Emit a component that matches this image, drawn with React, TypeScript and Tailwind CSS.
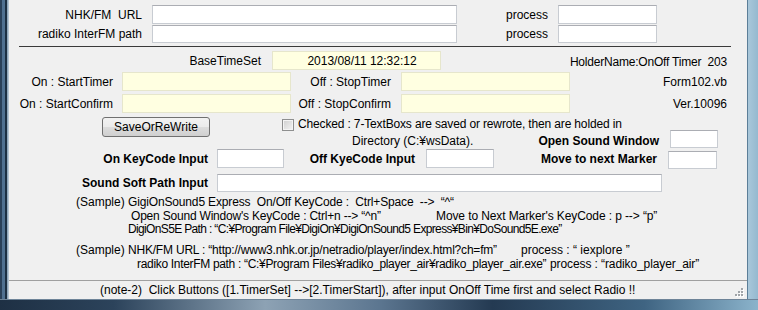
import React from 'react';

const txt = "text-[12px] leading-none text-black whitespace-nowrap";
const boxWhite = "bg-white border border-[#c8ccd2] border-t-[#abadb3]";
const boxYellow = "bg-[#ffffe1] border border-[#e6e6cc]";

const Grip: React.FC = () => (
  <svg width="10" height="10" viewBox="0 0 10 10" className="absolute right-[3px] bottom-[2px]">
    {[
      [7, 1],
      [4, 4], [7, 4],
      [1, 7], [4, 7], [7, 7],
    ].map(([x, y], i) => (
      <g key={i}>
        <rect x={x + 1} y={y + 1} width="2" height="2" fill="#ffffff" />
        <rect x={x} y={y} width="2" height="2" fill="#a0a4a8" />
      </g>
    ))}
  </svg>
);

const App: React.FC = () => {
  return (
    <div
      className="w-[758px] h-[310px] flex flex-col overflow-hidden"
      style={{ fontFamily: '"Liberation Sans", Arial, "Noto Sans CJK JP", sans-serif' }}
    >
      <div className="flex h-[299px]">
        {/* left window frame */}
        <div className="w-[9px] h-full bg-[linear-gradient(to_right,#2a4058_0px,#2a4058_2px,#4f7090_2px,#4f7090_5px,#1c2f42_5px,#1c2f42_7px,#7f98ae_7px,#c5d3de_9px)]" />

        {/* client area */}
        <div className="w-[738px] h-full bg-[#f0f0f0] flex flex-col">
          {/* Row 1 */}
          <div className="mt-[5px] h-[19px] flex items-center">
            <div className={`w-[133px] flex justify-end ${txt}`}>NHK/FM&nbsp;&nbsp;URL</div>
            <div className={`ml-[10px] w-[305px] h-full ${boxWhite}`} />
            <div className={`w-[91px] flex justify-end ${txt}`}>process</div>
            <div className={`ml-[10px] w-[99px] h-full ${boxWhite}`} />
          </div>
          {/* Row 2 */}
          <div className="mt-[1px] h-[18px] flex items-center">
            <div className={`w-[133px] flex justify-end ${txt}`}>radiko InterFM path</div>
            <div className={`ml-[10px] w-[305px] h-full ${boxWhite}`} />
            <div className={`w-[91px] flex justify-end ${txt}`}>process</div>
            <div className={`ml-[10px] w-[99px] h-full ${boxWhite}`} />
          </div>

          {/* separator */}
          <div className="mt-[3px] ml-[10px] w-[712px] h-px bg-[#3a3a3a]" />

          {/* Row 3 */}
          <div className="mt-[4px] h-[19px] flex items-center pr-[20px]">
            <div className={`w-[252px] flex justify-end ${txt}`}>BaseTimeSet</div>
            <div className={`ml-[11px] w-[169px] h-full flex items-center justify-center pl-[11px] ${boxYellow} ${txt}`}>
              2013/08/11 12:32:12
            </div>
            <div className={`flex-1 flex justify-end pt-[2px] tracking-[-0.2px] ${txt}`}>HolderName:OnOff Timer&nbsp;&nbsp;203</div>
          </div>

          {/* Row 4 */}
          <div className="mt-[2px] h-[19px] flex items-center pr-[20px]">
            <div className={`w-[104px] flex justify-end ${txt}`}>On : StartTimer</div>
            <div className={`ml-[9px] w-[169px] h-full ${boxYellow}`} />
            <div className={`w-[100px] flex justify-end ${txt}`}>Off : StopTimer</div>
            <div className={`ml-[10px] w-[169px] h-full ${boxYellow}`} />
            <div className={`flex-1 flex justify-end ${txt}`}>Form102.vb</div>
          </div>

          {/* Row 5 */}
          <div className="mt-[3px] h-[19px] flex items-center pr-[20px]">
            <div className={`w-[104px] flex justify-end ${txt}`}>On : StartConfirm</div>
            <div className={`ml-[9px] w-[169px] h-full ${boxYellow}`} />
            <div className={`w-[100px] flex justify-end ${txt}`}>Off : StopConfirm</div>
            <div className={`ml-[10px] w-[169px] h-full ${boxYellow}`} />
            <div className={`flex-1 flex justify-end ${txt}`}>Ver.10096</div>
          </div>

          {/* Row 6/7 */}
          <div className="mt-[4px] flex items-start">
            <button className={`ml-[93px] w-[108px] h-[20px] rounded-[3px] border border-[#707070] bg-[linear-gradient(to_bottom,#f2f2f2_0%,#ebebeb_50%,#dddddd_50%,#cfcfcf_100%)] flex items-center justify-center ${txt}`}>
              SaveOrReWrite
            </button>
            <div className="ml-[72px] flex flex-col">
              <div className="h-[13px] flex items-start">
                <div className="mt-[2px] w-[12px] h-[12px] border border-[#8e8f8f] bg-[linear-gradient(135deg,#cfcfcf,#f4f4f4)] shadow-[inset_0_0_0_1px_#f4f4f4]" />
                <div className={`ml-[4px] pt-[1px] tracking-[-0.15px] ${txt}`}>Checked : 7-TextBoxs are saved or rewrote, then are holded in</div>
              </div>
              <div className="h-[18px] flex items-center">
                <div className="w-[377px] flex items-center justify-between">
                  <div className={`pl-[70px] pt-[4px] ${txt}`}>Directory (C:¥wsData).</div>
                  <div className={`font-bold pt-[4px] ${txt}`}>Open Sound Window</div>
                </div>
                <div className={`ml-[11px] w-[48px] h-full ${boxWhite}`} />
              </div>
            </div>
          </div>

          {/* Row 8 */}
          <div className="mt-[1px] h-[19px] flex items-center">
            <div className={`w-[199px] flex justify-end font-bold ${txt}`}>On KeyCode Input</div>
            <div className={`ml-[9px] w-[67px] h-full ${boxWhite}`} />
            <div className={`w-[131px] flex justify-end font-bold ${txt}`}>Off KyeCode Input</div>
            <div className={`ml-[11px] w-[68px] h-full ${boxWhite}`} />
            <div className={`w-[163px] flex justify-end font-bold ${txt}`}>Move to next Marker</div>
            <div className={`ml-[11px] w-[49px] h-[18px] mt-[2px] ${boxWhite}`} />
          </div>

          {/* Row 9 */}
          <div className="mt-[6px] h-[18px] flex items-center">
            <div className={`w-[199px] flex justify-end font-bold ${txt}`}>Sound Soft Path Input</div>
            <div className={`ml-[9px] w-[445px] h-full ${boxWhite}`} />
          </div>

          {/* Samples */}
          <div className="mt-[3px] h-[14px] flex items-center">
            <span className={`ml-[67px] w-[52px] ${txt}`}>(Sample)</span>
            <span className={`whitespace-pre tracking-[-0.15px] ${txt}`}>{'GigiOnSound5 Express  On/Off KeyCode :  Ctrl+Space  -->  “^“'}</span>
          </div>
          <div className="h-[13px] flex items-center">
            <span className={`ml-[122px] w-[305px] tracking-[-0.2px] ${txt}`}>{"Open Sound Window's KeyCode : Ctrl+n --> “^n”"}</span>
            <span className={`tracking-[-0.1px] ${txt}`}>{"Move to Next Marker's KeyCode : p --> “p”"}</span>
          </div>
          <div className="h-[14px] flex items-center">
            <span className={`ml-[119px] tracking-[-0.65px] ${txt}`}>DigiOnS5E Path : “C:¥Program File¥DigiOn¥DigiOnSound5 Express¥Bin¥DoSound5E.exe”</span>
          </div>
          <div className="mt-[7px] h-[14px] flex items-center">
            <span className={`ml-[67px] w-[52px] ${txt}`}>(Sample)</span>
            <span className={`w-[393px] tracking-[-0.2px] ${txt}`}>NHK/FM URL : “http://www3.nhk.or.jp/netradio/player/index.html?ch=fm”</span>
            <span className={`whitespace-pre ${txt}`}>{'process : “ iexplore ”'}</span>
          </div>
          <div className="h-[14px] flex items-center">
            <span className={`ml-[128px] w-[413px] tracking-[-0.32px] ${txt}`}>radiko InterFM path : “C:¥Program Files¥radiko_player_air¥radiko_player_air.exe”</span>
            <span className={`tracking-[-0.1px] ${txt}`}>process : “radiko_player_air”</span>
          </div>

          <div className="flex-1" />

          {/* status bar */}
          <div className="relative h-[19px] border-t border-[#a0a0a0] flex items-center">
            <span className={`ml-[91px] whitespace-pre ${txt}`}>{'(note-2)  Click Buttons ([1.TimerSet] -->[2.TimerStart]), after input OnOff Time first and select Radio !!'}</span>
            <Grip />
          </div>
        </div>

        {/* right window frame */}
        <div className="w-[11px] h-full bg-[linear-gradient(to_right,#5b7e98_0px,#5b7e98_1px,#a9c7da_1px,#95b9cf_100%)]" />
      </div>

      {/* bottom window frame */}
      <div className="h-[11px] bg-[linear-gradient(to_right,#1e3044_0%,#2c435b_15%,#8da2b4_35%,#5c7690_50%,#243a52_65%,#3f6482_85%,#8bb3cb_100%)] border-t border-[#6e8498]" />
    </div>
  );
};

export default App;
